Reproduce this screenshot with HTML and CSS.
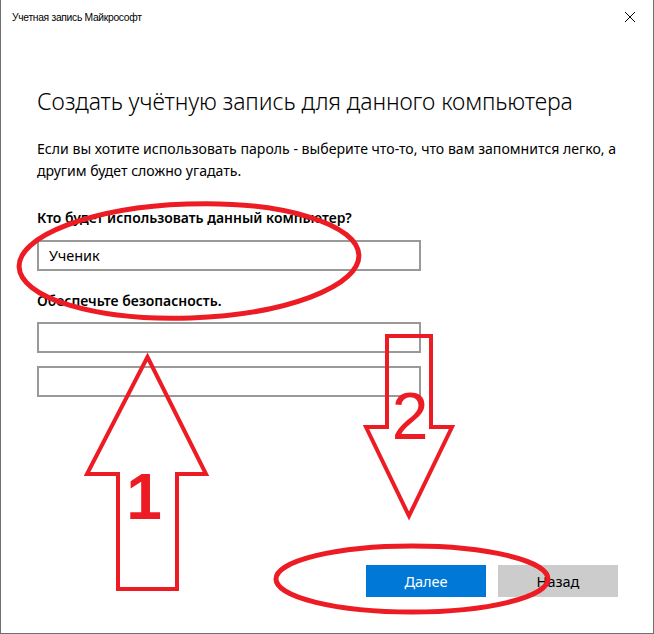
FILE: index.html
```html
<!DOCTYPE html>
<html lang="ru">
<head>
<meta charset="utf-8">
<title>Учетная запись Майкрософт</title>
<link rel="stylesheet" href="styles.css">
</head>
<body>
<div class="window">
  <div class="titlebar">
    <span class="title">Учетная запись Майкрософт</span>
    <span class="close">
      <svg width="12" height="12" viewBox="0 0 12 12"><path d="M1 1 L11 11 M11 1 L1 11" stroke="#000" stroke-width="1"/></svg>
    </span>
  </div>
  <div class="content">
    <h1 class="heading">Создать учётную запись для данного компьютера</h1>
    <p class="intro">Если вы хотите использовать пароль - выберите что-то, что вам запомнится легко, а другим будет сложно угадать.</p>
    <div class="label">Кто будет использовать данный компьютер?</div>
    <div class="field">Ученик</div>
    <div class="label label-sec">Обеспечьте безопасность.</div>
    <div class="field"></div>
    <div class="field field-gap"></div>
  </div>
  <div class="buttons">
    <div class="btn btn-primary">Далее</div>
    <div class="btn btn-secondary">Назад</div>
  </div>
  <svg class="annot" width="654" height="634" viewBox="0 0 654 634">
    <g fill="none" stroke="#ed1c24" stroke-width="4" stroke-linejoin="miter">
      <ellipse cx="189" cy="261" rx="170" ry="57" stroke-width="5" transform="rotate(-2 189 261)"/>
      <polygon points="147.5,357 87,474 118,474 118,589 177,589 177,474 206,474"/>
      <polygon points="387,336 431,336 431,427 452,427 409,516 366,427 387,427"/>
      <ellipse cx="412" cy="579" rx="136" ry="33" stroke-width="5"/>
    </g>
    <text x="144" y="519" class="num num-bold" text-anchor="middle">1</text>
    <text x="410" y="439" class="num" text-anchor="middle">2</text>
  </svg>
</div>
</body>
</html>
```
FILE: styles.css
```css
html, body {
  margin: 0;
  padding: 0;
  background: #fff;
}
.window {
  position: relative;
  width: 652px;
  height: 633px;
  border-left: 1px solid #6f6f6f;
  border-right: 1px solid #6f6f6f;
  border-bottom: 1px solid #6f6f6f;
  display: flex;
  flex-direction: column;
  font-family: "Noto Sans", "Open Sans", sans-serif;
  color: #000;
  overflow: hidden;
}
.titlebar {
  height: 34px;
  display: flex;
  align-items: center;
  justify-content: space-between;
  padding: 0 17px 0 11px;
}
.title {
  font-family: "Liberation Sans", Arial, sans-serif;
  font-size: 10.3px;
  letter-spacing: -0.3px;
}
.close {
  display: flex;
}
.content {
  padding: 0 36px 0 36px;
  display: flex;
  flex-direction: column;
}
.heading {
  margin: 52px 0 0 0;
  font-size: 23px;
  font-weight: 300;
  line-height: 30px;
  letter-spacing: -0.1px;
}
.intro {
  margin: 22px 0 0 0;
  font-size: 14.1px;
  line-height: 22px;
}
.label {
  margin-top: 26px;
  font-size: 13.95px;
  font-weight: 600;
  line-height: 20px;
}
.label-sec {
  margin-top: 20px;
}
.field {
  margin-top: 12px;
  height: 27px;
  border: 2px solid #999;
  font-size: 14.5px;
  line-height: 27px;
  padding-left: 10px;
  box-sizing: content-box;
  width: 370px;
}
.label-sec + .field {
  margin-top: 11px;
}
.field-gap {
  margin-top: 13px;
}
.buttons {
  margin-top: auto;
  margin-bottom: 36px;
  display: flex;
  justify-content: flex-end;
  gap: 12px;
  padding-right: 35px;
}
.btn {
  width: 120px;
  height: 32px;
  line-height: 32px;
  text-align: center;
  font-size: 14.5px;
}
.btn-primary {
  background: #0078d7;
  color: #fff;
}
.btn-secondary {
  background: #cccccc;
  color: #000;
}
.annot {
  position: absolute;
  left: -1px;
  top: 0;
  pointer-events: none;
}
.num {
  font-family: "Liberation Sans", Arial, sans-serif;
  font-size: 66px;
  fill: #ed1c24;
}
.num-bold {
  font-weight: 700;
  font-size: 64px;
}
```
